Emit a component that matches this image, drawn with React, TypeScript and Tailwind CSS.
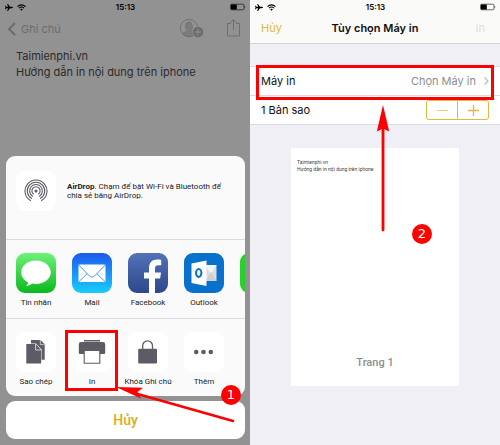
import type { ReactNode } from "react";

function Plane() {
  return (
    <svg viewBox="0 0 16 14" className="h-[7px] w-2" fill="currentColor" aria-hidden="true">
      <path d="M16 7c0 .8-1 1.3-2.300 1.300H10L6 14H4.200l2-5.700H3L1.500 10.300H0L1.100 7 0 3.700h1.500L3 5.700h3.200L4.200 0H6l4 5.700h3.700C15 5.700 16 6.200 16 7z" />
    </svg>
  );
}

function Wifi() {
  return (
    <svg viewBox="0 0 18 14" className="h-[7px] w-[9px]" fill="none" stroke="currentColor" strokeWidth="2.200" aria-hidden="true">
      <path d="M1 5.200c4.500-4.500 11.500-4.500 16 0M4 8.400c2.900-2.800 7.100-2.800 10 0" />
      <path d="M9 13.500 6.200 10.700c1.600-1.500 4-1.500 5.600 0z" fill="currentColor" stroke="none" />
    </svg>
  );
}

function Battery() {
  return (
    <svg viewBox="0 0 16 8" className="h-2 w-4" aria-hidden="true">
      <rect x="0.500" y="1.200" width="13.500" height="5.600" rx="1.300" fill="none" stroke="currentColor" strokeWidth="0.600" />
      <path d="M1 1.500h5.800v5H1z" fill="currentColor" />
      <path d="M14.700 2.800q1.200 1.200 0 2.400z" fill="currentColor" />
    </svg>
  );
}

function StatusBar() {
  return (
    <div className="grid h-[14px] grid-cols-3 items-center pr-1 pl-[5px] text-black">
      <div className="flex items-center gap-1">
        <Plane />
        <Wifi />
      </div>
      <span className="text-center text-[8px] font-semibold">15:13</span>
      <div className="flex justify-end">
        <Battery />
      </div>
    </div>
  );
}

function AirDropIcon() {
  return (
    <svg viewBox="0 0 24 24" className="size-6" fill="none" stroke="#5c5b66" strokeWidth="1.100" aria-hidden="true">
      <path d="M6.900 21.800a11 11 0 1 1 10.200 0" />
      <path d="M7.900 19.600a8.700 8.700 0 1 1 8.200 0" />
      <path d="M8.800 17.400a6.400 6.400 0 1 1 6.400 0" />
      <path d="M9.700 15.200a4.100 4.100 0 1 1 4.600 0" />
      <circle cx="12" cy="12" r="1.500" fill="#5c5b66" stroke="none" />
    </svg>
  );
}

function MessagesIcon() {
  return (
    <svg viewBox="0 0 40 40" className="size-10" aria-hidden="true">
      <defs>
        <linearGradient id="messages" x2="0" y2="1">
          <stop stopColor="#6df276" />
          <stop offset="1" stopColor="#0bb81e" />
        </linearGradient>
      </defs>
      <rect width="40" height="40" rx="9" fill="url(#messages)" />
      <path d="M20 7.500c-8.300 0-14.800 5.200-14.800 11.800 0 4.300 2.700 8 6.900 10.100-.2 1.600-.9 2.700-2.200 3.500 2.500 0 4.700-.9 6.100-2.300 1.300.3 2.600.4 4 .4 8.300 0 14.800-5.200 14.800-11.700S28.300 7.500 20 7.500z" fill="#fff" />
    </svg>
  );
}

function MailIcon() {
  return (
    <svg viewBox="0 0 40 40" className="size-10" aria-hidden="true">
      <defs>
        <linearGradient id="mail" x2="0" y2="1">
          <stop stopColor="#1d58ee" />
          <stop offset="1" stopColor="#19cdfb" />
        </linearGradient>
      </defs>
      <rect width="40" height="40" rx="9" fill="url(#mail)" />
      <rect x="6.500" y="11.500" width="27" height="17.500" rx="1" fill="#fff" />
      <path d="m6.800 12 10.400 10.800c1.700 1.700 3.900 1.700 5.600 0L33.200 12M6.800 28.700l8.300-8M33.200 28.700l-8.300-8" fill="none" stroke="#2c8be9" strokeWidth="0.900" />
    </svg>
  );
}

function FacebookIcon() {
  return (
    <svg viewBox="0 0 40 40" className="size-10" aria-hidden="true">
      <defs>
        <linearGradient id="facebook" x2="0" y2="1">
          <stop stopColor="#5272b8" />
          <stop offset="1" stopColor="#2d478a" />
        </linearGradient>
      </defs>
      <rect width="40" height="40" rx="9" fill="url(#facebook)" />
      <path d="M21 40V25.500h-5v-6h5v-4.300c0-5.500 3-8.700 8.300-8.700 1.700 0 3.300.1 3.900.3v5.500h-3c-2.500 0-3.200 1.300-3.200 3.300v3.900h6l-.9 6H27V40z" fill="#fff" />
    </svg>
  );
}

function OutlookIcon() {
  return (
    <svg viewBox="0 0 40 40" className="size-10" aria-hidden="true">
      <rect width="40" height="40" rx="9" fill="#0871cb" />
      <path d="M21 12h11.500v16H21z" fill="#dcdde0" />
      <path d="m21 12 6 9 5.500-9z" fill="#f4f4f5" />
      <path d="m21 28 6-9 5.500 9z" fill="#cfd0d3" />
      <path d="m7.500 10.500 15-3v25.500l-15-3z" fill="#fff" />
      <ellipse cx="14.700" cy="20" rx="2.700" ry="3.900" fill="none" stroke="#0871cb" strokeWidth="2" />
    </svg>
  );
}

function CopyIcon() {
  return (
    <svg viewBox="0 0 28 26" className="h-[26px] w-7" fill="#5c5b66" aria-hidden="true">
      <path d="M9 1h9.500L22.700 5.300v15.400H9z" />
      <path d="M18.300 1v4.600h4.400" fill="none" stroke="#fff" strokeWidth="0.600" />
      <path d="M4 4.600h10l5.600 5.900v14.200H4z" fill="#fff" />
      <path d="M4.300 5h9.400l5.500 5.900v13.600H4.300z" />
      <path d="M13.600 5v6h5.600" fill="none" stroke="#fff" strokeWidth="0.700" />
    </svg>
  );
}

function PrinterIcon() {
  return (
    <svg viewBox="0 0 28 26" className="h-[26px] w-7" aria-hidden="true">
      <path d="M6 1h16v1.600H6zM3 3h22q2.200 0 2.200 2.200v8.800q0 1-1 1H1.800q-1 0-1-1V5.200q0-2.200 2.200-2.200z" fill="#5c5b66" />
      <path d="M6.200 11.500h15.600v12.800H6.200z" fill="#fff" stroke="#5c5b66" strokeWidth="1.100" />
    </svg>
  );
}

function LockIcon() {
  return (
    <svg viewBox="0 0 28 26" className="h-[26px] w-7" aria-hidden="true">
      <path d="M8.700 11V6.700a4.900 4.900 0 0 1 9.800 0V11" fill="none" stroke="#5c5b66" strokeWidth="1.300" />
      <rect x="4.200" y="9.700" width="18.800" height="14.700" rx="1.200" fill="#5c5b66" />
    </svg>
  );
}

function MoreIcon() {
  return (
    <svg viewBox="0 0 28 26" className="h-[26px] w-7" fill="#5c5b66" aria-hidden="true">
      <circle cx="6.200" cy="13" r="2.300" />
      <circle cx="13.500" cy="13" r="2.300" />
      <circle cx="20.800" cy="13" r="2.300" />
    </svg>
  );
}

function ShareItem({ label, tile = false, marked = false, children }: { label?: string; tile?: boolean; marked?: boolean; children: ReactNode }) {
  return (
    <button type="button" aria-label={label ? undefined : "LINE"} className="relative flex w-14 shrink-0 flex-col items-center gap-1 font-[Roboto,sans-serif] text-[8px] leading-3 whitespace-nowrap text-[#222]">
      <span className={tile ? "flex size-10 items-center justify-center rounded-[9px] bg-white" : "size-10"}>{children}</span>
      {label}
      {marked && <span className="absolute -top-0.5 left-[1px] h-[61px] w-[53px] border-3 border-[#fe0000]" />}
    </button>
  );
}

function Badge({ children }: { children: ReactNode }) {
  return (
    <span className="flex size-5 items-center justify-center rounded-full bg-[#fe0000] font-['DejaVu_Sans',sans-serif] text-[13px] leading-5 text-white">
      {children}
    </span>
  );
}

function NotesScreen() {
  return (
    <section className="flex min-w-0 flex-col overflow-hidden bg-[#929292]">
      <StatusBar />
      <header className="flex h-[30px] items-center justify-between pr-[9px] pl-[7px] text-[#6c6c6c]">
        <button type="button" className="flex items-center gap-[5px] text-[11px]">
          <svg viewBox="0 0 9 14" className="h-[14px] w-[9px]" fill="none" stroke="currentColor" strokeWidth="2" aria-hidden="true">
            <path d="M8 1 2 7l6 6" />
          </svg>
          Ghi chú
        </button>
        <div className="flex items-center gap-[22px]">
          <button type="button" aria-label="Thêm người">
            <svg viewBox="0 0 25 20" className="h-5 w-[25px]" fill="none" stroke="currentColor" aria-hidden="true">
              <circle cx="10" cy="9" r="8.700" strokeWidth="0.800" />
              <path d="M3.500 14.500c1-1.600 4.500-1.500 4.500-3-1.800-2-2.300-8.500 2-8.500s3.800 6.500 2 8.500c0 1.500 3.500 1.400 4.500 3-3.500 4-9.500 4-13 0z" fill="#7c7c7c" strokeWidth="0.700" />
              <circle cx="19" cy="13" r="5.500" fill="currentColor" stroke="#929292" strokeWidth="0.700" />
              <path d="M15.800 13h6.400M19 9.800v6.400" stroke="#929292" />
            </svg>
          </button>
          <button type="button" aria-label="Chia sẻ">
            <svg viewBox="0 0 15 20" className="h-5 w-[15px]" fill="none" stroke="currentColor" strokeWidth="0.900" aria-hidden="true">
              <path d="M5 4.500H1.500v12.500h12v-12.500H10M7.500 11V.700M4.500 3.700l3-3 3 3" />
            </svg>
          </button>
        </div>
      </header>
      <p className="px-4 pt-1 text-[11px] leading-4 text-[#2b2b2b]">
        Taimienphi.vn
        <br />
        Hướng dẫn in nội dung trên iphone
      </p>

      <div className="relative mt-auto flex flex-col gap-[5px] pr-[5px] pb-[6px] pl-[6px]">
        <div className="overflow-hidden rounded-[9px] bg-[#fafafa]">
          <div className="flex h-[84px] gap-[11px] border-b border-[#dcdce0] px-[10px] pt-[15px]">
            <span className="flex size-10 shrink-0 items-center justify-center rounded-[9px] bg-white">
              <AirDropIcon />
            </span>
            <p className="pt-[11px] font-[Roboto,sans-serif] text-[8px] leading-[9px] text-[#222]">
              <strong className="font-bold">AirDrop</strong>. Chạm để bật Wi-Fi và Bluetooth để
              <br />
              chia sẻ bằng AirDrop.
            </p>
          </div>
          <div className="flex h-[79px] border-b border-[#dcdce0] pt-[13px] pl-0.5">
            <ShareItem label="Tin nhắn"><MessagesIcon /></ShareItem>
            <ShareItem label="Mail"><MailIcon /></ShareItem>
            <ShareItem label="Facebook"><FacebookIcon /></ShareItem>
            <ShareItem label="Outlook"><OutlookIcon /></ShareItem>
            <ShareItem>
              <span className="block size-10 rounded-[9px] bg-[#29cf2d]" />
            </ShareItem>
          </div>
          <div className="flex h-[77px] pt-[13px] pl-0.5">
            <ShareItem label="Sao chép" tile><CopyIcon /></ShareItem>
            <ShareItem label="In" tile marked><PrinterIcon /></ShareItem>
            <ShareItem label="Khóa Ghi chú" tile><LockIcon /></ShareItem>
            <ShareItem label="Thêm" tile><MoreIcon /></ShareItem>
          </div>
        </div>
        <button type="button" className="h-[38px] rounded-[9px] bg-white font-[Roboto,sans-serif] text-sm font-medium text-[#d9ae14]">
          Hủy
        </button>
        <svg viewBox="0 0 120 40" className="absolute bottom-[21px] left-[116px] h-10 w-[120px]" aria-hidden="true">
          <path d="M117 37 18 9" stroke="#fe0000" strokeWidth="2.500" strokeLinecap="round" />
          <path d="m0 3 27 .8-5.500 4.200L25 14.500z" fill="#fe0000" />
        </svg>
        <div className="absolute right-[9px] bottom-10">
          <Badge>1</Badge>
        </div>
      </div>
    </section>
  );
}

function PrintScreen() {
  return (
    <section className="relative flex min-w-0 flex-col bg-[#efeff5]">
      <div className="border-b border-[#d3d3d6] bg-[#fafaf8]">
        <StatusBar />
        <header className="grid h-[29px] grid-cols-[1fr_auto_1fr] items-center px-[11px] text-[11px]">
          <button type="button" className="justify-self-start text-[#dfb93c]">Hủy</button>
          <h1 className="font-semibold text-[#111]">Tùy chọn Máy in</h1>
          <button type="button" disabled className="justify-self-end pr-1 text-[#dedede]">In</button>
        </header>
      </div>

      <div className="relative mt-[22px] border-y border-[#dcdce0] bg-white text-[11px] text-[#111]">
        <button type="button" className="flex h-[29px] w-full items-center justify-between border-b border-[#dcdce0] px-[11px]">
          Máy in
          <span className="flex items-center gap-2 text-[#8e8e93]">
            Chọn Máy in
            <svg viewBox="0 0 5 8" className="h-2 w-[5px]" fill="none" stroke="#b9b9be" strokeWidth="1.200" aria-hidden="true">
              <path d="m.5.500 3.500 3.500L.5 7.500" />
            </svg>
          </span>
        </button>
        <div className="flex h-7 items-center justify-between px-[11px]">
          <span>1 Bản sao</span>
          <div className="flex h-5 w-[63px] divide-x divide-[#dfb93c] rounded-[3px] border border-[#dfb93c] text-[#dfb93c]">
            <button type="button" aria-label="Giảm" className="flex flex-1 items-center justify-center">
              <span className="h-px w-[11px] bg-[#e8cd72]" />
            </button>
            <button type="button" aria-label="Tăng" className="flex flex-1 items-center justify-center">
              <svg viewBox="0 0 11 11" className="size-[11px]" stroke="currentColor" strokeWidth="1.300" aria-hidden="true">
                <path d="M5.500 0v11M0 5.500h11" />
              </svg>
            </button>
          </div>
        </div>
        <span className="absolute inset-x-[6px] -top-0.5 h-[35px] border-3 border-[#fe0000]" />
        <svg viewBox="0 0 16 127" className="absolute top-[38px] left-[125px] h-[127px] w-4" aria-hidden="true">
          <path d="M8 20v105" stroke="#fe0000" strokeWidth="2.800" strokeLinecap="round" />
          <path d="m8 0 6.200 26.500L8 23.500l-6.200 3z" fill="#fe0000" />
        </svg>
        <div className="absolute top-[157px] left-[162px]">
          <Badge>2</Badge>
        </div>
      </div>

      <article className="mx-[41px] mt-[23px] flex h-[238px] flex-col justify-between bg-white px-[6px] pt-[11px] pb-[15px] font-[Roboto,sans-serif]">
        <p className="text-[5px] leading-[7px] text-[#444]">
          Taimienphi.vn
          <br />
          Hướng dẫn in nội dung trên iphone
        </p>
        <p className="text-center text-[11px] leading-4 font-medium text-[#8e8e8e]">Trang 1</p>
      </article>
    </section>
  );
}

export default function App() {
  return (
    <main className="grid min-h-screen grid-cols-2 font-[Inter,'Liberation_Sans',sans-serif]">
      <NotesScreen />
      <PrintScreen />
    </main>
  );
}
